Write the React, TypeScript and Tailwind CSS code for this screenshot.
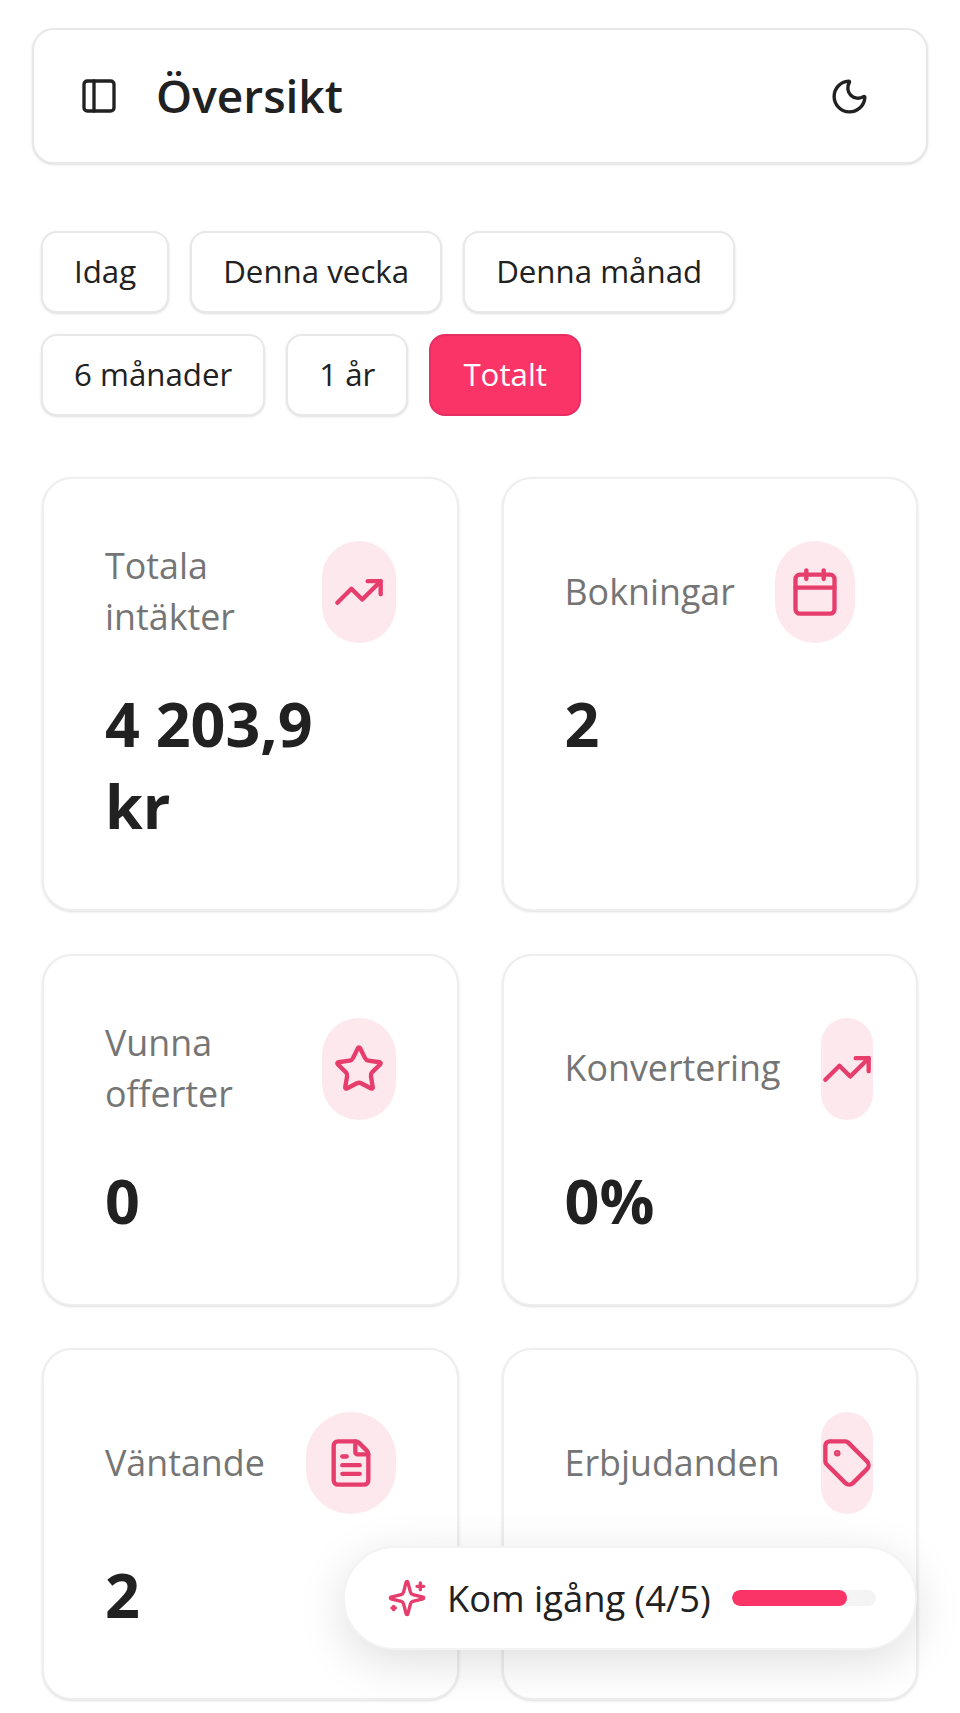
import { Calendar, FileText, Moon, PanelLeft, Star, Tag, TrendingUp } from "lucide-react";

const ranges = ["Idag", "Denna vecka", "Denna månad", "6 månader", "1 år", "Totalt"];

// the last value sits behind the floating pill in the screenshot, so it stays blank
const stats = [
  { label: "Totala intäkter", value: "4 203,9 kr", icon: TrendingUp, pill: "w-[74px]", gap: "" },
  { label: "Bokningar", value: "2", icon: Calendar, pill: "w-[80px]", gap: "" },
  { label: "Vunna offerter", value: "0", icon: Star, pill: "w-[74px]", gap: "" },
  { label: "Konvertering", value: "0%", icon: TrendingUp, pill: "w-[52px]", gap: "-mr-[18px]" },
  { label: "Väntande", value: "2", icon: FileText, pill: "w-[90px]", gap: "" },
  { label: "Erbjudanden", value: "\u00a0", icon: Tag, pill: "w-[52px]", gap: "-mr-[18px]" },
];

export default function App() {
  return (
    <div className="relative h-[1713px] overflow-hidden bg-white font-['Open_Sans',sans-serif] text-[#212121]">
      {/* HEADER */}
      <div className="px-8 pt-7">
        <header className="flex h-[136px] items-center justify-between rounded-[22px] border-2 border-[#e8e8e8] bg-white pl-[45px] pr-[56px] shadow-sm">
          <div className="flex items-center gap-[37px]">
            <PanelLeft className="h-[40px] w-[40px]" strokeWidth={2} />
            <h1 className="pb-[2px] text-[46px] font-semibold leading-none">Översikt</h1>
          </div>
          <Moon className="h-[41px] w-[41px]" strokeWidth={2} />
        </header>
      </div>

      {/* RANGE BUTTONS */}
      <div className="mt-[67px] flex w-[800px] flex-wrap gap-x-[21px] gap-y-[21px] pl-[41px]">
        {ranges.map((r) => (
          <button
            key={r}
            className={
              r === "Totalt"
                ? "h-[82px] rounded-[16px] border-2 border-[#e62e63] bg-[#fb3468] px-[32px] pb-[2px] text-[31.25px] text-white"
                : "h-[82px] rounded-[16px] border-2 border-[#e8e8e8] bg-white px-[31px] pb-[2px] text-[31.25px] text-[#212121] shadow-sm"
            }
          >
            {r}
          </button>
        ))}
      </div>

      {/* STATS */}
      <div className="mt-[61px] grid grid-cols-2 gap-x-[43px] gap-y-[42.5px] px-[42px]">
        {stats.map((s) => {
          const Icon = s.icon;
          return (
            <div key={s.label} className="rounded-[30px] border-2 border-[#eeeeee] bg-white px-[61px] py-[62px] shadow-sm">
              <div className="flex items-center justify-between gap-4">
                <span className="-mt-[2px] text-[35.8px] leading-[51px] text-[#757575]">{s.label}</span>
                <div className={`flex h-[102px] shrink-0 items-center justify-center rounded-full bg-[#fde8ee] ${s.pill} ${s.gap}`}>
                  <Icon className="h-[52px] w-[52px] shrink-0 text-[#e63d6c]" strokeWidth={2} />
                </div>
              </div>
              <p className="mt-[40px] max-w-[280px] text-[61px] font-bold leading-[82px]">{s.value}</p>
            </div>
          );
        })}
      </div>

      {/* GETTING STARTED */}
      <div className="absolute left-[343px] top-[1546px] flex h-[104px] w-[574px] items-center rounded-full border-2 border-[#f3f3f3] bg-white pl-[42px] shadow-[0_12px_48px_rgba(0,0,0,0.13)]">
        <svg viewBox="0 0 24 24" fill="none" stroke="currentColor" strokeWidth={2} strokeLinecap="round" strokeLinejoin="round" className="h-[40px] w-[40px] text-[#e63d6c]">
          <path d="M9.937 15.5A2 2 0 0 0 8.5 14.063l-6.135-1.582a.5.5 0 0 1 0-.962L8.5 9.936A2 2 0 0 0 9.937 8.5l1.582-6.135a.5.5 0 0 1 .963 0L14.063 8.5A2 2 0 0 0 15.5 9.937l6.135 1.581a.5.5 0 0 1 0 .964L15.5 14.063a2 2 0 0 0-1.437 1.437l-1.582 6.135a.5.5 0 0 1-.963 0z" />
          <path d="M20 3v4M22 5h-4M4 17v2M5 18H3" />
        </svg>
        <span className="ml-[20px] text-[36.3px] text-[#212121]">Kom igång (4/5)</span>
        <div className="ml-[21px] h-[16px] w-[144px] overflow-hidden rounded-full bg-[#f4f4f4]">
          <div className="h-full rounded-full bg-[#fb3468]" style={{ width: "80%" }} />
        </div>
      </div>
    </div>
  );
}
